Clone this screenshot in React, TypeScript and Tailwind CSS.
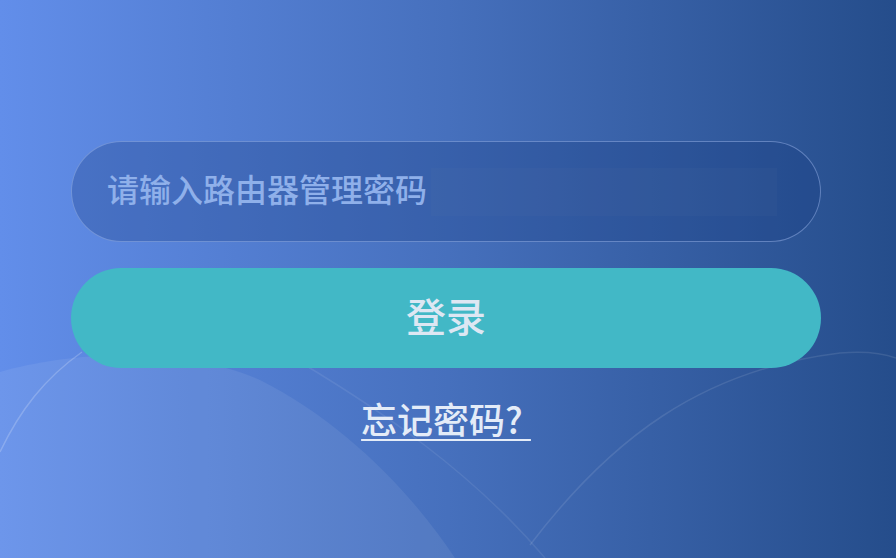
import { useState } from 'react'

const cjk = { fontFamily: '"Noto Sans CJK SC", "Noto Sans", sans-serif' }

// soft hills and thin arcs drawn behind the form
const Backdrop = () => (
  <svg className="absolute inset-0 h-full w-full" viewBox="0 0 896 558" preserveAspectRatio="none">
    <path d="M0,372 C70,352 180,345 260,380 C340,420 410,490 455,558 L0,558 Z" fill="#ffffff" fillOpacity="0.07" />
    <path d="M0,452 C20,410 45,378 82,352" fill="none" stroke="#ffffff" strokeOpacity="0.2" strokeWidth="1.5" />
    <path d="M300,362 C380,410 470,470 545,558" fill="none" stroke="#ffffff" strokeOpacity="0.08" strokeWidth="1.5" />
    <path d="M530,545 C610,440 700,370 840,353 C865,351 885,354 896,358" fill="none" stroke="#ffffff" strokeOpacity="0.1" strokeWidth="1.5" />
  </svg>
)

export default function App() {
  const [password, setPassword] = useState('')

  return (
    <div
      className="relative w-[896px] h-[558px] overflow-hidden bg-gradient-to-r from-[#628eea] via-[#4670bd] to-[#254d8b]"
      style={cjk}
    >
      <Backdrop />
      <div className="relative flex flex-col items-center pl-[71px] pr-[75px] pt-[141px]">
        <div className="flex w-full h-[101px] items-center rounded-full border border-[#9bb6ec]/50 bg-[#173a80]/30 pl-[35px] pr-[43px]">
          <input
            type="password"
            value={password}
            onChange={(e) => setPassword(e.target.value)}
            placeholder="请输入路由器管理密码"
            className="w-[324px] pb-[8px] bg-transparent text-[32px] font-medium text-[#e6eefb] placeholder:text-[#8fb0ea] outline-none"
            style={cjk}
          />
          <div className="h-[48px] flex-1 bg-[#7f8fa8]/[0.06]" />
        </div>

        <button
          className="mt-[26px] flex w-full h-[100px] items-center justify-center rounded-full bg-[#42b8c6] pb-[6px] text-[40px] font-medium text-[#dde7f3]"
          style={cjk}
        >
          登录
        </button>

        <a href="#" className="mt-[28px] text-[36px] leading-[44px] font-medium text-[#e4ecf8] underline underline-offset-[5px] decoration-2">
          忘记密码?&nbsp;
        </a>
      </div>
    </div>
  )
}
